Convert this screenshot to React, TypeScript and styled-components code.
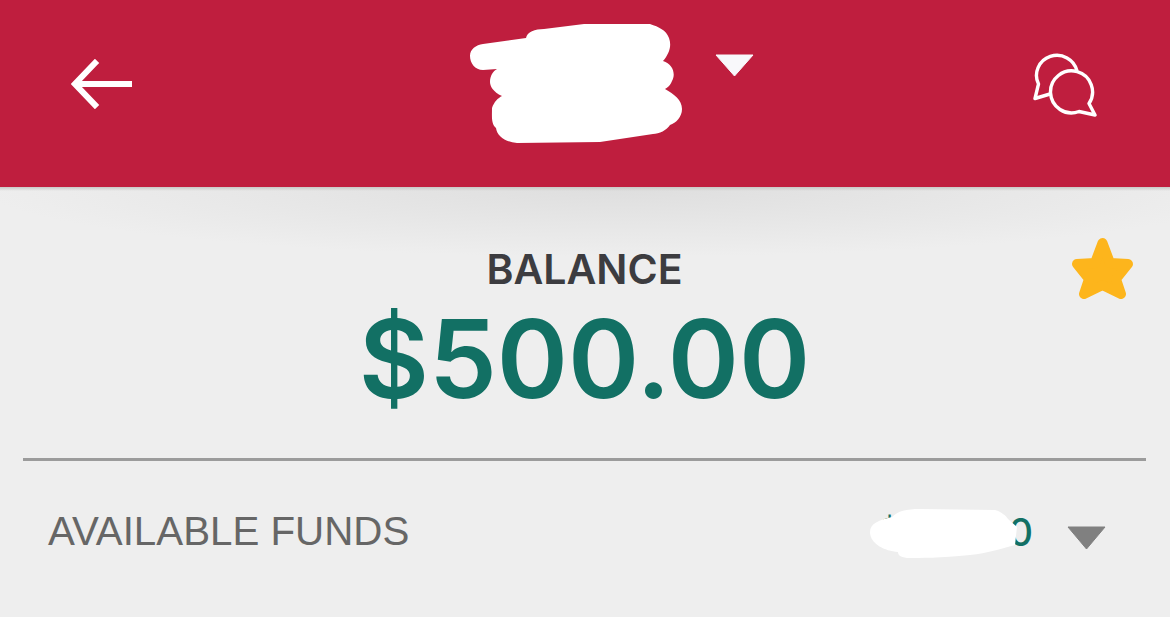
import styled, { createGlobalStyle } from "styled-components";

const GlobalStyle = createGlobalStyle`
  html, body {
    margin: 0;
    padding: 0;
    background: #ffffff;
  }
`;

const Page = styled.div`
  width: 1170px;
  height: 641px;
  overflow: hidden;
  background: #ffffff;
  font-family: Inter, "Liberation Sans", sans-serif;
`;

const Header = styled.header`
  height: 187px;
  box-sizing: border-box;
  padding: 0 73px 20px 71px;
  background: #bf1e3e;
  display: flex;
  align-items: center;
`;

const BackButton = styled.div`
  display: flex;
`;

const AccountPicker = styled.div`
  display: flex;
  margin-left: 336px;
  margin-right: auto;
`;

const PickerCaret = styled.svg`
  display: block;
  margin: 30px 0 0 32px;
`;

const ChatIcon = styled.svg`
  display: block;
  margin-top: 3px;
`;

const Body = styled.main`
  position: relative;
  height: 430px;
  background:
    linear-gradient(#c9c9c6 0, rgba(238, 238, 238, 0) 4px),
    radial-gradient(ellipse 640px 70px at 620px 0, #dedede 0%, rgba(238, 238, 238, 0) 100%),
    #eeeeee;
`;

const BalanceBlock = styled.section`
  height: 274px;
  box-sizing: border-box;
  padding-top: 57px;
  margin: 0 24px 0 23px;
  border-bottom: 3px solid #9b9b9b;
  text-align: center;
`;

const BalanceLabel = styled.div`
  font-size: 41px;
  line-height: 50px;
  font-weight: 600;
  color: #3c3c40;
`;

const BalanceAmount = styled.div`
  font-size: 108px;
  line-height: 130px;
  font-weight: 600;
  color: #127064;
`;

const Star = styled.svg`
  position: absolute;
  top: 49px;
  left: 1069px;
`;

const FundsRow = styled.section`
  display: flex;
  align-items: center;
  justify-content: space-between;
  height: 142px;
  padding: 0 64px 0 48px;
`;

const FundsLabel = styled.div`
  font-family: "Liberation Sans", Arial, sans-serif;
  font-size: 40.300px;
  line-height: 48px;
  color: #666666;
`;

const FundsValue = styled.div`
  display: flex;
  align-items: center;
  gap: 34px;
`;

const FundsAmount = styled.div`
  position: relative;
  font-size: 38px;
  line-height: 46px;
  font-weight: 500;
  color: #127064;
`;

const AmountMask = styled.svg`
  position: absolute;
  top: 0;
  right: 16px;
`;

const FundsCaret = styled.svg`
  display: block;
  margin-top: 12px;
`;

export default function App() {
  return (
    <Page>
      <GlobalStyle />
      <Header>
        <BackButton>
          <svg width="62" height="50" viewBox="0 0 62 50" fill="none" stroke="#fff" strokeWidth="6">
            <path d="M24 4 4 25l20 21" strokeLinecap="square" />
            <path d="M4 25h57" />
          </svg>
        </BackButton>
        <AccountPicker>
          <svg width="214" height="120" viewBox="0 0 214 120">
            <path
              d="M14 20 57 14C58 8 66 5 75 5L115 0 181 0C190 3 197 6 200 14 203 22 200 30 194 37 204 40 207 50 203 57 201 62 198 64 196 65 205 70 213 76 213 85 213 93 207 99 201 101 198 106 190 110 184 110L131 118 48 119C36 118 28 112 27 104 22 100 23 92 23 84 25 78 29 74 33 72 24 68 21 62 21 58 21 52 24 47 28 45L14 46C6 46 1 39 1 32 1 25 7 21 14 20Z"
              fill="#fff"
            />
          </svg>
          <PickerCaret width="39" height="23" viewBox="0 0 39 23">
            <path d="M1 1h37L19.500 22z" fill="#f8f8fb" stroke="#f8f8fb" strokeLinejoin="round" />
          </PickerCaret>
        </AccountPicker>
        <ChatIcon width="64" height="64" viewBox="0 0 64 64" fill="none" stroke="#fff" strokeWidth="3.400" strokeLinejoin="round">
          <path d="M44 18A20.500 20 0 1 0 5.500 31L2 45.500 17 41" />
          <path d="M46 58.500A21 21 0 1 1 56 50.500L62 62Z" />
        </ChatIcon>
      </Header>
      <Body>
        <BalanceBlock>
          <BalanceLabel>BALANCE</BalanceLabel>
          <BalanceAmount>$500.00</BalanceAmount>
        </BalanceBlock>
        <Star width="68" height="68" viewBox="0 0 68 68">
          <path
            d="M33.500 7 41 27 59 28 47 43 52 58 33.500 49 15 58 20 43 8 28 26 27Z"
            fill="#fdb51c"
            stroke="#fdb51c"
            strokeWidth="10"
            strokeLinejoin="round"
          />
        </Star>
        <FundsRow>
          <FundsLabel>AVAILABLE FUNDS</FundsLabel>
          <FundsValue>
            <FundsAmount>
              $500.00
              <AmountMask width="147" height="49" viewBox="0 0 147 49">
                <path
                  d="M0 23C0 15 8 11 22 8 28 2 36 0 50 0L125 1C132 3 136 7 138 10L147 18 145 36C130 40 118 44 100 46 70 49 50 49 37 49 30 48 28 46 28 43 15 42 0 35 0 23Z"
                  fill="#fff"
                />
              </AmountMask>
            </FundsAmount>
            <FundsCaret width="39" height="24" viewBox="0 0 39 24">
              <path d="M1 1h37L19.500 23z" fill="#808080" stroke="#808080" strokeLinejoin="round" />
            </FundsCaret>
          </FundsValue>
        </FundsRow>
      </Body>
    </Page>
  );
}
